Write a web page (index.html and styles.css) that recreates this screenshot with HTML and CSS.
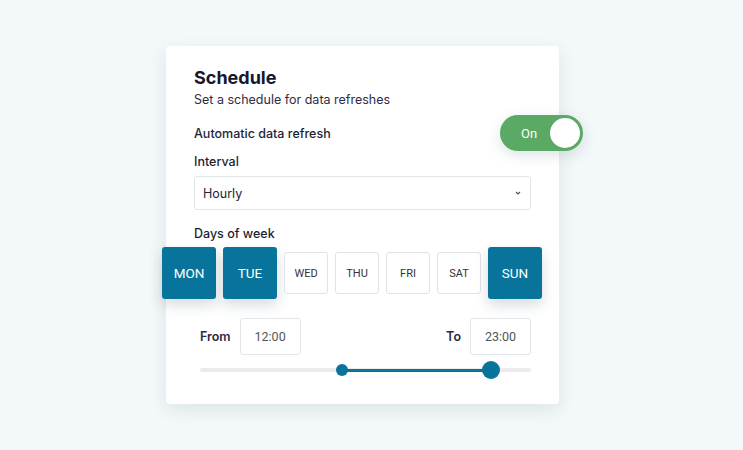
FILE: index.html
```html
<!DOCTYPE html>
<html lang="en">
<head>
    <meta charset="UTF-8">
    <meta name="viewport" content="width=device-width, initial-scale=1.0">
    <link rel="stylesheet" href="styles.css">
</head>
<body>

    <div class="card">
        <h1>Schedule</h1>
        <p class="subtitle">Set a schedule for data refreshes</p>

        <div class="refresh-row">
            <span class="label">Automatic data refresh</span>
            <div class="toggle">
                <span class="toggle-text">On</span>
                <span class="knob"></span>
            </div>
        </div>

        <div class="label interval-label">Interval</div>
        <div class="select">
            <span>Hourly</span>
            <svg width="8" height="6" viewBox="0 0 8 6"><path d="M2 2 L4 4 L6 2" fill="none" stroke="#555" stroke-width="1.2"/></svg>
        </div>

        <div class="label days-label">Days of week</div>
        <div class="days">
            <div class="day active">MON</div>
            <div class="day active">TUE</div>
            <div class="day">WED</div>
            <div class="day">THU</div>
            <div class="day">FRI</div>
            <div class="day">SAT</div>
            <div class="day active">SUN</div>
        </div>

        <div class="time-row">
            <div class="time-group">
                <span class="time-label">From</span>
                <div class="time-box">12:00</div>
            </div>
            <div class="time-group">
                <span class="time-label">To</span>
                <div class="time-box">23:00</div>
            </div>
        </div>

        <div class="slider">
            <div class="track">
                <div class="range" style="left: 43%; width: 44.8%;"></div>
                <div class="thumb small" style="left: 43%;"></div>
                <div class="thumb big" style="left: 87.8%;"></div>
            </div>
        </div>
    </div>

</body>
</html>
```

FILE: styles.css
```css
body {
    margin: 0;
    width: 743px;
    height: 450px;
    background-color: #f3f8f9;
    font-family: Inter, "Noto Sans", sans-serif;
    color: #1d1f36;
    overflow: hidden;
}

.card {
    width: 337px;
    margin: 46px 0 0 166px;
    padding: 21px 28px 32px 28px;
    background: #fff;
    border-radius: 4px;
    box-shadow: 0 6px 18px rgba(40, 70, 80, 0.10);
}

h1 {
    font-size: 18px;
    font-weight: 700;
    margin: 0;
    line-height: 22px;
    color: #15172e;
}

.subtitle {
    font-size: 12.5px;
    margin: 2px 0 0 0;
    line-height: 18px;
    color: #2c2e44;
}

.label {
    font-size: 12.5px;
    font-weight: 500;
    color: #1d1f36;
}

.refresh-row {
    display: flex;
    justify-content: space-between;
    align-items: center;
    margin: 6px -52px 0 0;
    height: 36px;
}

.toggle {
    width: 83px;
    height: 36px;
    border-radius: 18px;
    background: #5aa964;
    display: flex;
    align-items: center;
    justify-content: space-between;
    padding: 0 3px 0 21px;
    box-sizing: border-box;
    box-shadow: 0 4px 14px rgba(60, 100, 110, 0.18);
}

.toggle-text {
    font-family: Roboto, sans-serif;
    color: #fff;
    font-size: 13px;
}

.knob {
    width: 30px;
    height: 30px;
    border-radius: 50%;
    background: #fff;
}

.interval-label {
    margin-top: 2px;
    line-height: 18px;
}

.select {
    margin-top: 5px;
    height: 34px;
    border: 1px solid #e2e6e8;
    border-radius: 3px;
    box-sizing: border-box;
    display: flex;
    align-items: center;
    justify-content: space-between;
    padding: 0 8px 0 8px;
    font-size: 12.5px;
    color: #1d1f36;
}

.days-label {
    margin-top: 15px;
    line-height: 18px;
}

.days {
    display: flex;
    align-items: center;
    gap: 7px;
    margin: 4px -12px 0 -32px;
    height: 52px;
}

.day {
    flex-shrink: 0;
    width: 44px;
    height: 42px;
    border: 1px solid #e0e3e6;
    border-radius: 3px;
    box-sizing: border-box;
    display: flex;
    align-items: center;
    justify-content: center;
    font-family: Roboto, sans-serif;
    font-size: 11px;
    font-weight: 400;
    color: #333;
    background: #fff;
}

.day.active {
    width: 54px;
    height: 52px;
    border: none;
    background: #08749c;
    color: #fff;
    font-size: 13.5px;
    box-shadow: 0 6px 14px rgba(20, 60, 80, 0.18);
}

.time-row {
    display: flex;
    justify-content: space-between;
    margin: 19px 0 0 6px;
}

.time-group {
    display: flex;
    align-items: center;
    gap: 9px;
}

.time-label {
    font-size: 12.5px;
    font-weight: 600;
    color: #2a2c44;
}

.time-box {
    width: 61px;
    height: 37px;
    border: 1px solid #e2e6e8;
    border-radius: 3px;
    box-sizing: border-box;
    display: flex;
    align-items: center;
    justify-content: center;
    font-family: Roboto, sans-serif;
    font-size: 12.5px;
    color: #555;
}

.slider {
    margin: 13px 0 0 6px;
    height: 4px;
}

.track {
    position: relative;
    height: 4px;
    border-radius: 2px;
    background: #ebebeb;
}

.range {
    position: absolute;
    top: 0.5px;
    height: 3px;
    background: #08749c;
}

.thumb {
    position: absolute;
    border-radius: 50%;
    background: #08749c;
    transform: translate(-50%, -50%);
    top: 2px;
}

.thumb.small {
    width: 12px;
    height: 12px;
}

.thumb.big {
    width: 18px;
    height: 18px;
}
```
